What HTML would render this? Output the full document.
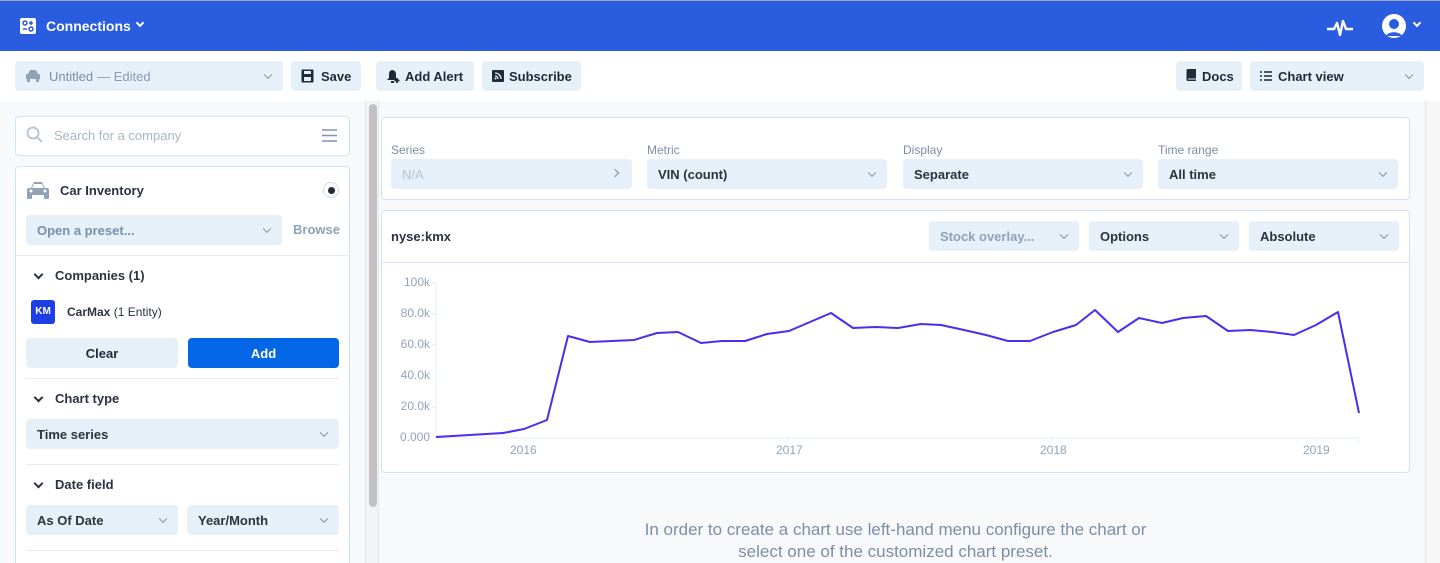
<!DOCTYPE html>
<html><head><meta charset="utf-8"><style>
*{box-sizing:border-box;margin:0;padding:0}
html,body{width:1440px;height:563px;overflow:hidden}
body{background:#f7f9fb;font-family:"Liberation Sans",sans-serif;position:relative;color:#1f2937}
.a{position:absolute}
.top{left:0;top:0;width:1440px;height:51px;background:#2a5ce0;border-top:1px solid #9aa4b8}
.bar{left:0;top:51px;width:1440px;height:50px;background:#fff}
.btn{position:absolute;background:#e6f0f8;border-radius:4px;font-size:13px;font-weight:bold;color:#1f2937;display:flex;align-items:center}
.sel{position:absolute;background:#e6f0f8;border-radius:4px;font-size:13px;font-weight:bold;color:#2b3340;display:flex;align-items:center;padding-left:11px}
.chev{position:absolute;right:12px;top:50%;width:6px;height:6px;border-right:1.5px solid #7b8ea8;border-bottom:1.5px solid #7b8ea8;transform:translateY(-70%) rotate(45deg)}
.box{position:absolute;background:#fff;border:1px solid #cfe3f0;border-radius:4px}
.hr{position:absolute;height:1px;background:#e3edf5}
.lbl{position:absolute;font-size:12px;color:#7b8ea8}
.sec{position:absolute;font-size:13px;font-weight:bold;color:#2b3340}
.sec:before{content:"";position:absolute;left:-20px;top:3px;width:5px;height:5px;border-right:2px solid #2b3340;border-bottom:2px solid #2b3340;transform:rotate(45deg)}
.ax{position:absolute;font-size:12px;color:#94a3bb}
</style></head><body>
<div class="a top">
 <svg class="a" style="left:19px;top:16px" width="18" height="18" viewBox="0 0 18 18"><rect x="1" y="1" width="16" height="16" rx="2" fill="#fff"/><circle cx="6" cy="6" r="2" fill="none" stroke="#2a5ce0" stroke-width="1.5"/><circle cx="12" cy="12" r="2" fill="none" stroke="#2a5ce0" stroke-width="1.5"/><path d="M12 4v4M4 12h4M10 6h4" stroke="#2a5ce0" stroke-width="1.5"/></svg>
 <div class="a" style="left:46px;top:17px;color:#fff;font-size:14px;font-weight:bold">Connections</div>
 <div class="a" style="left:137px;top:19px;width:6px;height:6px;border-right:2px solid #fff;border-bottom:2px solid #fff;transform:rotate(45deg)"></div>
 <svg class="a" style="left:1326px;top:16px" width="28" height="22" viewBox="0 0 28 22"><path d="M1 12h7l3-6 3 12 3-14 3 8h7" fill="none" stroke="#fff" stroke-width="2.4" stroke-linejoin="round"/></svg>
 <svg class="a" style="left:1381px;top:13px" width="26" height="24" viewBox="0 0 26 24"><circle cx="13" cy="12" r="12" fill="#fff"/><circle cx="13" cy="10" r="5" fill="#2a5ce0"/><path d="M5 22c2-5 14-5 16 0" fill="#2a5ce0"/></svg>
 <div class="a" style="left:1414px;top:19px;width:6px;height:6px;border-right:2px solid #fff;border-bottom:2px solid #fff;transform:rotate(45deg)"></div>
</div>
<div class="a bar"></div>
<div class="sel" style="left:15px;top:61px;width:268px;height:30px;padding-left:34px;color:#7b8ea8;font-weight:normal">Untitled <span style="margin-left:4px;color:#8a9bb0">— Edited</span><span class="chev"></span>
 <svg class="a" style="left:10px;top:8px" width="16" height="14" viewBox="0 0 16 14"><path d="M3 5l2-4h6l2 4h1a1 1 0 011 1v4H1V6a1 1 0 011-1z M2 10h3v3H2zM11 10h3v3h-3z" fill="#8fa2b8"/></svg></div>
<div class="btn" style="left:291px;top:61px;width:70px;height:30px;padding-left:30px">Save<svg class="a" style="left:10px;top:8px" width="13" height="14"><rect x="0.5" y="0.5" width="12" height="13" rx="1" fill="#1f2937"/><rect x="3" y="2" width="7" height="3" fill="#e6f0f8"/><rect x="3" y="8" width="7" height="4" fill="#e6f0f8"/></svg></div>
<div class="btn" style="left:376px;top:61px;width:98px;height:30px;padding-left:29px">Add Alert<svg class="a" style="left:11px;top:8px" width="14" height="14"><path d="M5 1a4 4 0 014 4v4l2 2H0l2-2V5a4 4 0 013-4zM4 12h3v2H4z" fill="#1f2937"/><path d="M10 9v5M7.5 11.5h5" stroke="#1f2937" stroke-width="1.8"/></svg></div>
<div class="btn" style="left:482px;top:61px;width:99px;height:30px;padding-left:27px">Subscribe<svg class="a" style="left:10px;top:9px" width="12" height="12"><rect width="12" height="12" rx="1" fill="#1f2937"/><path d="M3 3a6 6 0 016 6M3 6a3 3 0 013 3" stroke="#e6f0f8" stroke-width="1.3" fill="none"/><circle cx="3.5" cy="8.5" r="1" fill="#e6f0f8"/></svg></div>
<div class="btn" style="left:1176px;top:61px;width:66px;height:30px;padding-left:26px">Docs<svg class="a" style="left:10px;top:7px" width="11" height="15"><path d="M2 1h8v12H2a1.5 1.5 0 01-1.5-1.5V2.5A1.5 1.5 0 012 1z" fill="#1f2937"/><path d="M2 11h8" stroke="#e6f0f8"/></svg></div>
<div class="sel" style="left:1250px;top:61px;width:174px;height:30px;padding-left:28px;color:#1f2937">Chart view<span class="chev"></span><svg class="a" style="left:10px;top:10px" width="12" height="10"><path d="M0 1h2M4 1h8M0 5h2M4 5h8M0 9h2M4 9h8" stroke="#1f2937" stroke-width="1.6"/></svg></div>

<div class="box" style="left:15px;top:116px;width:335px;height:40px"></div>
<svg class="a" style="left:26px;top:126px" width="18" height="18"><circle cx="7" cy="7" r="5.5" fill="none" stroke="#b9c8d8" stroke-width="2"/><path d="M11 11l5 5" stroke="#b9c8d8" stroke-width="2"/></svg>
<div class="a" style="left:54px;top:128px;font-size:13px;color:#a8b6c8">Search for a company</div>
<svg class="a" style="left:322px;top:129px" width="15" height="13"><path d="M0 1h15M0 6.5h15M0 12h15" stroke="#8294ab" stroke-width="1.6"/></svg>
<div class="box" style="left:15px;top:166px;width:335px;height:410px"></div>
<svg class="a" style="left:26px;top:181px" width="24" height="19" viewBox="0 0 24 19"><path d="M5 7l3-6h8l3 6h2a2 2 0 012 2v5H1V9a2 2 0 012-2z" fill="#8fa2b8"/><rect x="1" y="13" width="5" height="5" rx="1" fill="#8fa2b8"/><rect x="18" y="13" width="5" height="5" rx="1" fill="#8fa2b8"/><path d="M8 3h8l2 4H6z" fill="#fff"/><circle cx="5" cy="10" r="1.5" fill="#fff"/><circle cx="19" cy="10" r="1.5" fill="#fff"/></svg>
<div class="a" style="left:60px;top:183px;font-size:13px;font-weight:bold;color:#2b3340">Car Inventory</div>
<div class="a" style="left:323px;top:182px;width:16px;height:16px;border-radius:50%;border:1px solid #cfdbe6;background:#fff"><div class="a" style="left:4px;top:4px;width:7px;height:7px;border-radius:50%;background:#1f2937"></div></div>
<div class="sel" style="left:26px;top:215px;width:256px;height:30px;color:#7b8ea8">Open a preset...<span class="chev"></span></div>
<div class="a" style="left:293px;top:222px;font-size:13px;font-weight:bold;color:#8fa2b8">Browse</div>
<div class="hr" style="left:16px;top:255px;width:333px"></div>
<div class="sec" style="left:55px;top:268px">Companies (1)</div>
<div class="a" style="left:31px;top:300px;width:24px;height:24px;border-radius:3px;background:#1d3fe3;color:#fff;font-size:10px;font-weight:bold;text-align:center;line-height:24px">KM</div>
<div class="a" style="left:67px;top:305px;font-size:12px;color:#2b3340"><b style="font-weight:bold">CarMax</b> (1 Entity)</div>
<div class="btn" style="left:26px;top:338px;width:152px;height:30px;justify-content:center">Clear</div>
<div class="btn" style="left:188px;top:338px;width:151px;height:30px;justify-content:center;background:#0366e6;color:#fff">Add</div>
<div class="hr" style="left:26px;top:378px;width:313px"></div>
<div class="sec" style="left:55px;top:391px">Chart type</div>
<div class="sel" style="left:26px;top:419px;width:313px;height:30px">Time series<span class="chev"></span></div>
<div class="hr" style="left:26px;top:464px;width:313px"></div>
<div class="sec" style="left:55px;top:477px">Date field</div>
<div class="sel" style="left:26px;top:505px;width:152px;height:30px">As Of Date<span class="chev"></span></div>
<div class="sel" style="left:187px;top:505px;width:152px;height:30px">Year/Month<span class="chev"></span></div>
<div class="hr" style="left:26px;top:550px;width:313px"></div>

<div class="a" style="left:365px;top:101px;width:14px;height:462px;background:#f1f3f5;border-left:1px solid #e3e7ec;border-right:1px solid #e3e7ec"></div>
<div class="a" style="left:369px;top:104px;width:8px;height:403px;background:#c1c1c1;border-radius:4px"></div>
<div class="a" style="left:1425px;top:101px;width:15px;height:462px;background:#f7f7f7;border-left:1px solid #e6e6e6"></div>

<div class="box" style="left:381px;top:117px;width:1029px;height:83px"></div>
<div class="lbl" style="left:391px;top:143px">Series</div>
<div class="lbl" style="left:647px;top:143px">Metric</div>
<div class="lbl" style="left:903px;top:143px">Display</div>
<div class="lbl" style="left:1158px;top:143px">Time range</div>
<div class="sel" style="left:391px;top:159px;width:241px;height:30px;color:#b4c2d2;font-weight:normal">N/A<span class="a" style="right:14px;top:11px;width:6px;height:6px;border-right:1.5px solid #7b8ea8;border-top:1.5px solid #7b8ea8;transform:rotate(45deg)"></span></div>
<div class="sel" style="left:647px;top:159px;width:240px;height:30px">VIN (count)<span class="chev"></span></div>
<div class="sel" style="left:903px;top:159px;width:240px;height:30px">Separate<span class="chev"></span></div>
<div class="sel" style="left:1158px;top:159px;width:240px;height:30px">All time<span class="chev"></span></div>

<div class="box" style="left:381px;top:210px;width:1029px;height:263px"></div>
<div class="hr" style="left:382px;top:262px;width:1027px;background:#d6e6f2"></div>
<div class="a" style="left:391px;top:229px;font-size:13px;font-weight:bold;color:#2b3340">nyse:kmx</div>
<div class="sel" style="left:929px;top:221px;width:150px;height:30px;color:#8fa2b8">Stock overlay...<span class="chev"></span></div>
<div class="sel" style="left:1089px;top:221px;width:150px;height:30px">Options<span class="chev"></span></div>
<div class="sel" style="left:1249px;top:221px;width:150px;height:30px">Absolute<span class="chev"></span></div>

<div class="ax" style="left:380px;width:50px;text-align:right;top:275px">100k</div>
<div class="ax" style="left:380px;width:50px;text-align:right;top:306px">80.0k</div>
<div class="ax" style="left:380px;width:50px;text-align:right;top:337px">60.0k</div>
<div class="ax" style="left:380px;width:50px;text-align:right;top:368px">40.0k</div>
<div class="ax" style="left:380px;width:50px;text-align:right;top:399px">20.0k</div>
<div class="ax" style="left:380px;width:50px;text-align:right;top:430px">0.000</div>
<div class="ax" style="left:510px;top:443px">2016</div>
<div class="ax" style="left:776px;top:443px">2017</div>
<div class="ax" style="left:1040px;top:443px">2018</div>
<div class="ax" style="left:1303px;top:443px">2019</div>
<svg class="a" style="left:0;top:0" width="1440" height="563">
<path d="M432 283h4V438h923M432 314h4M432 345h4M432 376h4M432 407h4M524 438v4M789 438v4M1053 438v4M1316 438v4M1359 438v4" fill="none" stroke="#e3ecf4" stroke-width="1"/>
<polyline fill="none" stroke="#4b2cf0" stroke-width="2" stroke-linejoin="round" points="436,437 503,433 524,429 547,420 568,336 590,342 634,340 657,333 678,332 701,343 722,341 745,341 767,334 789,331 810,322 831,313 853,328 875,327 898,328 921,324 941,325 964,330 986,335 1008,341 1030,341 1053,332 1076,325 1095,310 1118,332 1139,318 1162,323 1183,318 1206,316 1228,331 1250,330 1272,332 1294,335 1316,325 1338,312 1359,413"/>
</svg>
<div class="a" style="left:381px;top:519px;width:1029px;text-align:center;font-size:17px;line-height:22px;color:#7d8ea6">In order to create a chart use left-hand menu configure the chart or<br>select one of the customized chart preset.</div>
</body></html>
